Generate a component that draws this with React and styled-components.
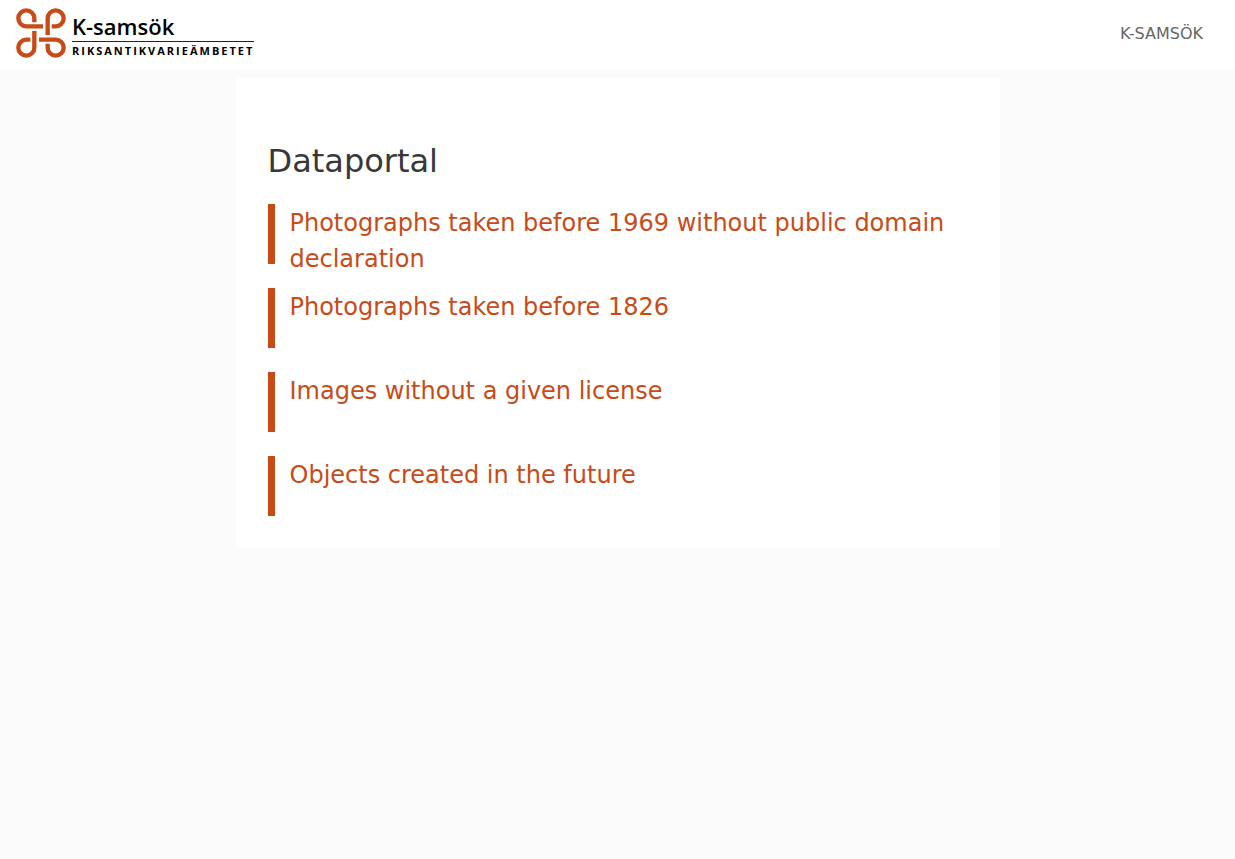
import React from "react";
import styled, { createGlobalStyle } from "styled-components";

const GlobalStyle = createGlobalStyle`
  *, *::before, *::after { box-sizing: border-box; }
  body {
    margin: 0;
    background: #fbfbfb;
    color: #383838;
    font-family: "DejaVu Sans", sans-serif;
    font-size: 16px;
  }
`;

const Header = styled.header`
  display: flex;
  justify-content: space-between;
  align-items: flex-start;
  height: 70px;
  padding: 8px 32px 0 16px;
  background: #fff;
`;

const Brand = styled.a`
  display: flex;
  gap: 6px;
  color: #000;
  text-decoration: none;
  font-family: "Open Sans", sans-serif;
  font-weight: 600;
`;

const Knot = styled.svg`
  display: block;
  width: 50px;
  height: 50px;
  fill: none;
  stroke: #c84b17;
  stroke-width: 13;
`;

const BrandText = styled.span`
  display: flex;
  flex-direction: column;
  white-space: nowrap;
`;

const BrandName = styled.span`
  height: 34px;
  padding-top: 2px;
  border-bottom: 1px solid #222;
  font-size: 22px;
  line-height: 32px;
`;

const BrandOwner = styled.span`
  font-size: 11px;
  font-weight: 700;
  line-height: 18px;
  letter-spacing: 2px;
`;

const NavLink = styled.a`
  display: block;
  padding: 14px 0;
  color: #666;
  line-height: 24px;
  text-decoration: none;
  text-transform: uppercase;
`;

const Card = styled.main`
  max-width: 764px;
  margin: 8px auto 0;
  padding: 64px 32px 32px;
  background: #fff;
`;

const Title = styled.h1`
  margin: 0 0 24px;
  font-size: 32px;
  font-weight: 400;
  line-height: 38px;
`;

const List = styled.ul`
  display: grid;
  gap: 24px;
  margin: 0;
  padding: 0;
  list-style: none;
`;

const Item = styled.li`
  height: 60px;
  padding: 1px 0 0 15px;
  border-left: 7px solid #c84b17;
  font-size: 24px;
  line-height: 36px;
`;

const ItemLink = styled.a`
  color: #c84b17;
  text-decoration: none;
`;

const reports = [
  "Photographs taken before 1969 without public domain declaration",
  "Photographs taken before 1826",
  "Images without a given license",
  "Objects created in the future",
];

export default function App() {
  return (
    <>
      <GlobalStyle />
      <Header>
        <Brand href="#">
          <Knot viewBox="0 0 150 150" aria-hidden="true">
            <path d="M81 55H31A24 24 0 1 1 55 31V43" />
            <path d="M95 81V31A24 24 0 1 1 119 55H107" />
            <path d="M69 95H119A24 24 0 1 1 95 119V107" />
            <path d="M55 69V119A24 24 0 1 1 31 95H43" />
          </Knot>
          <BrandText>
            <BrandName>K-samsök</BrandName>
            <BrandOwner>RIKSANTIKVARIEÄMBETET</BrandOwner>
          </BrandText>
        </Brand>
        <nav>
          <NavLink href="#">K-samsök</NavLink>
        </nav>
      </Header>
      <Card>
        <Title>Dataportal</Title>
        <List>
          {reports.map((name) => (
            <Item key={name}>
              <ItemLink href="#">{name}</ItemLink>
            </Item>
          ))}
        </List>
      </Card>
    </>
  );
}
